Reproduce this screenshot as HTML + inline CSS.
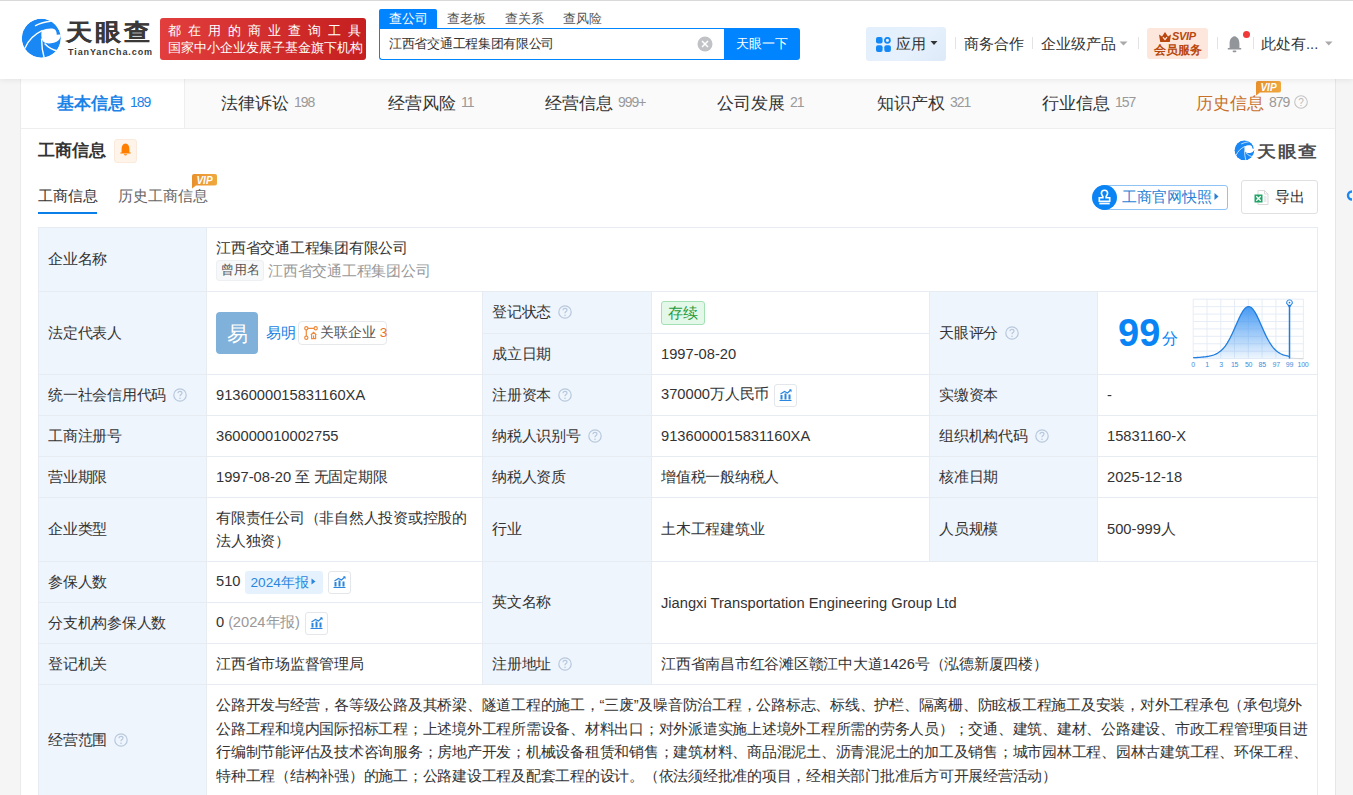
<!DOCTYPE html>
<html><head><meta charset="utf-8">
<style>
*{box-sizing:border-box;margin:0;padding:0}
html,body{width:1353px;height:795px;overflow:hidden;background:#f5f5f5;font-family:"Liberation Sans",sans-serif;color:#333}
.a{position:absolute;white-space:nowrap}
#hdr{position:absolute;left:0;top:0;width:1353px;height:79px;background:#fff;box-shadow:0 1px 6px rgba(0,0,0,.08);z-index:5}
#card{position:absolute;left:20px;top:79px;width:1316px;height:716px;background:#fff;border-left:1px solid #ebebeb;border-right:1px solid #e6e6e6}
#tabs{position:absolute;left:21px;top:79px;width:1314px;height:50px;background:#fafafa;border-bottom:1px solid #eee}
.tab{position:absolute;top:1px;height:48px;line-height:48px;font-size:16.8px;color:#333}
.tab i{font-style:normal;font-size:14px;color:#999;margin-left:5px;letter-spacing:-1px;position:relative;top:-2px}
</style></head><body>
<div id="hdr">
  <div class="a" style="left:0;top:0;width:1353px;height:1px;background:#d9d9d9"></div>
  <!-- logo -->
  <svg class="a" style="left:21px;top:18px" width="41" height="41" viewBox="0 0 41 41">
    <defs><clipPath id="lc1"><circle cx="20.3" cy="20.2" r="19.5"/></clipPath></defs>
    <g clip-path="url(#lc1)"><circle cx="20.3" cy="20.2" r="19.5" fill="#1a88f4"/>
    <path d="M20.9 12.5C24 10.8 29.5 9.8 33 10.9C35 11.8 35.8 13.5 35.7 16.8L38.4 16.5L42 17V19L39.6 18.6C39 21 37.8 22.6 35.5 23.8C32 25.5 27.5 25.8 24.8 25.1C23 24.5 21.8 23.2 21 21.5C20.2 19 20 15 20.9 12.5Z" fill="#fff"/>
    <path d="M14 7.8Q21 4.2 31 3" fill="none" stroke="#fff" stroke-width="1.3"/>
    <path d="M3.8 30.5Q8.5 18.5 21.5 12.4" fill="none" stroke="#fff" stroke-width="1.4"/>
    <path d="M20.6 20.5Q20.5 31 23.5 41" fill="none" stroke="#fff" stroke-width="1.4"/>
    <path d="M23.6 25.5Q29 31.5 37 33" fill="none" stroke="#fff" stroke-width="1.4"/></g>
  </svg>
  <div class="a" style="left:66px;top:18px;font-size:26px;line-height:32px;font-weight:bold;color:#3b3838;letter-spacing:3px;-webkit-text-stroke:0.2px #3b3838;transform:scaleY(0.88);transform-origin:0 0">天眼查</div>
  <div class="a" style="left:68px;top:47px;font-size:9px;line-height:11px;font-weight:bold;color:#3b3838;letter-spacing:0.9px">TianYanCha.com</div>
  <div class="a" style="left:160px;top:18px;width:206px;height:42px;border-radius:3px;background:linear-gradient(90deg,#e23e3e,#c51f1f)">
    <div class="a" style="left:8px;top:4px;font-size:13px;color:#fff;letter-spacing:7px">都在用的商业查询工具</div>
    <div class="a" style="left:8px;top:21px;font-size:13px;color:#fff">国家中小企业发展子基金旗下机构</div>
  </div>
  <!-- search -->
  <div class="a" style="left:379px;top:9px;width:58px;height:20px;background:#0084ff;color:#fff;font-size:13px;text-align:center;line-height:19px;border-radius:2px 2px 0 0">查公司</div>
  <div class="a" style="left:447px;top:9px;font-size:13px;line-height:19px;color:#555">查老板</div>
  <div class="a" style="left:505px;top:9px;font-size:13px;line-height:19px;color:#555">查关系</div>
  <div class="a" style="left:563px;top:9px;font-size:13px;line-height:19px;color:#555">查风险</div>
  <div class="a" style="left:379px;top:28px;width:346px;height:32px;border:1px solid #0084ff;border-right:none;border-radius:0 0 0 3px;background:#fff">
    <div class="a" style="left:9px;top:6px;font-size:13px;line-height:18px;color:#333;letter-spacing:-0.3px">江西省交通工程集团有限公司</div>
    <svg class="a" style="left:317px;top:7px" width="16" height="16" viewBox="0 0 16 16"><circle cx="8" cy="8" r="7.5" fill="#c0c2c6"/><path d="M5 5L11 11M11 5L5 11" stroke="#fff" stroke-width="1.5"/></svg>
  </div>
  <div class="a" style="left:724px;top:28px;width:76px;height:32px;background:#0084ff;color:#fff;font-size:13px;line-height:31px;text-align:center;border-radius:0 3px 3px 0">天眼一下</div>
  <!-- right -->
  <div class="a" style="left:866px;top:27px;width:80px;height:34px;background:linear-gradient(135deg,#e3effc 0%,#e6f1fd 60%,#dde9f8 100%);border-radius:3px"></div>
  <svg class="a" style="left:876px;top:37px" width="15" height="15" viewBox="0 0 15 15">
    <rect x="0" y="0" width="6.6" height="6.6" rx="2" fill="#1488f5"/>
    <circle cx="11.4" cy="3.3" r="2.5" fill="none" stroke="#1488f5" stroke-width="1.8"/>
    <rect x="0" y="8.3" width="6.6" height="6.6" rx="2" fill="#1488f5"/>
    <rect x="8.3" y="8.3" width="6.6" height="6.6" rx="2" fill="#1488f5"/>
  </svg>
  <svg class="a" style="left:930px;top:41px" width="8" height="4" viewBox="0 0 8 4"><path d="M0.5 0H7.5L4 4Z" fill="#333"/></svg>
  <svg class="a" style="left:1119px;top:41px" width="9" height="5" viewBox="0 0 9 5"><path d="M0.5 0.5H8.5L4.5 4.5Z" fill="#aaa"/></svg>
  <svg class="a" style="left:1325px;top:41px" width="8" height="5" viewBox="0 0 8 5"><path d="M0 0.5H7.5L3.75 4.5Z" fill="#aaa"/></svg>
  <div class="a" style="left:896px;top:34px;font-size:14.7px;line-height:20px;color:#333">应用</div>
  <div class="a" style="left:955px;top:37px;width:1px;height:12px;background:#e3e3e3"></div>
  <div class="a" style="left:964px;top:34px;font-size:14.7px;line-height:20px;color:#333">商务合作</div>
  <div class="a" style="left:1032px;top:37px;width:1px;height:12px;background:#e3e3e3"></div>
  <div class="a" style="left:1041px;top:34px;font-size:14.7px;line-height:20px;color:#333">企业级产品</div>
  <div class="a" style="left:1138px;top:37px;width:1px;height:12px;background:#e3e3e3"></div>
  <div class="a" style="left:1147px;top:28px;width:61px;height:31px;background:#fde6dc;border-radius:3px"></div>
  <svg class="a" style="left:1159px;top:32px" width="12" height="10" viewBox="0 0 12 10">
    <path d="M0 2.5L3 4.5L6 0L9 4.5L12 2.5L10.8 10H1.2Z" fill="#b8470d"/>
    <path d="M4 5.2L6 7.6L8 5.2" fill="none" stroke="#fde6dc" stroke-width="1.3"/>
  </svg>
  <div class="a" style="left:1172px;top:30px;font-size:11px;line-height:13px;font-weight:bold;font-style:italic;color:#b8470d;letter-spacing:-0.3px">SVIP</div>
  <div class="a" style="left:1154px;top:43px;font-size:12px;line-height:14px;font-weight:bold;color:#b8470d">会员服务</div>
  <svg class="a" style="left:1227px;top:35px" width="24" height="18" viewBox="0 0 24 18">
    <path d="M7.5 1.2C4 1.8 2.6 5 2.6 8.5V13H0.8V14.4H14.2V13H12.4V8.5C12.4 5 11 1.8 7.5 1.2Z" fill="#929599"/>
    <rect x="5.6" y="15.6" width="3.8" height="1.6" rx="0.8" fill="#929599"/>
    <circle cx="19.5" cy="-0.5" r="0" fill="#f03a3a"/>
  </svg>
  <div class="a" style="left:1243px;top:31px;width:7px;height:7px;border-radius:50%;background:#f03a3a"></div>
  <div class="a" style="left:1217px;top:37px;width:1px;height:12px;background:#e3e3e3"></div>
  <div class="a" style="left:1253px;top:37px;width:1px;height:12px;background:#e3e3e3"></div>
  <div class="a" style="left:1261px;top:34px;font-size:14.7px;line-height:20px;color:#333">此处有...</div>
</div>

<div id="card"></div>
<div id="tabs">
  <div class="a" style="left:0;top:0;width:164px;height:49px;background:#fff;border-right:1px solid #eee"></div>
  <div class="tab" style="left:36px;color:#1a83e8;font-weight:bold">基本信息<i style="color:#1a83e8;font-weight:normal">189</i></div>
  <div class="tab" style="left:200px">法律诉讼<i>198</i></div>
  <div class="tab" style="left:367px">经营风险<i>11</i></div>
  <div class="tab" style="left:524px">经营信息<i>999+</i></div>
  <div class="tab" style="left:696px">公司发展<i>21</i></div>
  <div class="tab" style="left:856px">知识产权<i>321</i></div>
  <div class="tab" style="left:1021px">行业信息<i>157</i></div>
  <div class="tab" style="left:1175px;color:#c8702a">历史信息<i>879</i></div>
  <svg class="a" style="left:1235px;top:1px" width="25" height="16" viewBox="0 0 25 16"><path d="M2 1H23Q25 1 25 3V10.5Q25 12.5 23 12.5H4L0 15.5V3Q0 1 2 1Z" fill="url(#vg)"/><text x="12.5" y="10.6" text-anchor="middle" font-family="Liberation Sans" font-weight="bold" font-style="italic" font-size="10" fill="#fff">VIP</text></svg>
  <svg class="a" style="left:1273px;top:16px" width="14" height="14" viewBox="0 0 14 14"><circle cx="7" cy="7" r="6.3" fill="none" stroke="#c4c4c4" stroke-width="1.1"/><text x="7" y="10.6" text-anchor="middle" font-family="Liberation Sans" font-size="10" fill="#bbb">?</text></svg>
</div>

<div class="a" style="left:38px;top:139px;font-size:16.8px;font-weight:bold;line-height:24px;color:#333">工商信息</div>
<div class="a" style="left:114px;top:139px;width:23px;height:24px;background:#fff4ea;border:1px solid #fbeadc;border-radius:3px"></div>
<svg class="a" style="left:120px;top:143px" width="11" height="13" viewBox="0 0 11 13"><path d="M5.5 0.6C2.8 0.9 1.6 3.2 1.6 6V9.4H0.3V10.6H10.7V9.4H9.4V6C9.4 3.2 8.2 0.9 5.5 0.6Z" fill="#ff7f00"/><path d="M3.8 11.2H7.2Q6.8 12.6 5.5 12.6Q4.2 12.6 3.8 11.2Z" fill="#ff7f00"/></svg>
<div class="a" style="left:38px;top:186px;font-size:14.7px;line-height:20px;color:#333">工商信息</div>
<div class="a" style="left:38px;top:212px;width:59px;height:2px;background:#0b7fe8"></div>
<div class="a" style="left:118px;top:186px;font-size:14.7px;line-height:20px;color:#666">历史工商信息</div>
<svg class="a" style="left:192px;top:173px" width="25" height="16" viewBox="0 0 25 16"><defs><linearGradient id="vg" x1="0" x2="1"><stop offset="0" stop-color="#e8912c"/><stop offset="1" stop-color="#f0a840"/></linearGradient></defs><path d="M2 1H23Q25 1 25 3V10.5Q25 12.5 23 12.5H4L0 15.5V3Q0 1 2 1Z" fill="url(#vg)"/><text x="12.5" y="10.6" text-anchor="middle" font-family="Liberation Sans" font-weight="bold" font-style="italic" font-size="10" fill="#fff">VIP</text></svg>

<div class="a" style="left:1100px;top:185px;width:128px;height:25px;border:1px solid #8fc3f5;border-radius:3px"></div>
<svg class="a" style="left:1092px;top:185px" width="25" height="25" viewBox="0 0 25 25"><circle cx="12.5" cy="12.5" r="12.5" fill="#0a84f5"/>
<path d="M12.5 5.2C10.6 5.2 9.4 6.6 9.4 8.3C9.4 9.6 10.4 10.6 10.9 11.6V12.8H7.3V16.2H17.7V12.8H14.1V11.6C14.6 10.6 15.6 9.6 15.6 8.3C15.6 6.6 14.4 5.2 12.5 5.2Z" fill="none" stroke="#fff" stroke-width="1.6"/>
<rect x="7.3" y="17.6" width="10.4" height="1.8" fill="#fff"/></svg>
<div class="a" style="left:1122px;top:187px;font-size:14.7px;line-height:20px;color:#2a7fd6">工商官网快照</div>
<svg class="a" style="left:1214px;top:193px" width="5" height="7" viewBox="0 0 5 7"><path d="M0.5 0L4.5 3.5L0.5 7Z" fill="#2a7fd6"/></svg>
<svg class="a" style="left:1254px;top:190px" width="15" height="15" viewBox="0 0 15 15"><path d="M4 0.5H10.5L14 4V14.5H4Z" fill="#fff" stroke="#d9d9d9"/><path d="M10.5 0.5V4H14" fill="none" stroke="#d9d9d9"/><rect x="0.5" y="4.5" width="8" height="8" fill="#21a366"/><path d="M2.3 6.3L6.7 10.7M6.7 6.3L2.3 10.7" stroke="#fff" stroke-width="1.3"/><path d="M10 7H12.5M10 9H12.5M10 11H12.5" stroke="#ccc" stroke-width="0.8"/></svg>
<div class="a" style="left:1241px;top:180px;width:77px;height:34px;border:1px solid #e0e0e0;border-radius:3px"></div>
<div class="a" style="left:1275px;top:187px;font-size:14.7px;line-height:20px;color:#333">导出</div>

<svg class="a" style="left:1234px;top:140px" width="21" height="21" viewBox="0 0 41 41"><defs><clipPath id="lc2"><circle cx="20.3" cy="20.2" r="19.5"/></clipPath></defs>
    <g clip-path="url(#lc2)"><circle cx="20.3" cy="20.2" r="19.5" fill="#1a88f4"/>
    <path d="M20.9 12.5C24 10.8 29.5 9.8 33 10.9C35 11.8 35.8 13.5 35.7 16.8L38.4 16.5L42 17V19L39.6 18.6C39 21 37.8 22.6 35.5 23.8C32 25.5 27.5 25.8 24.8 25.1C23 24.5 21.8 23.2 21 21.5C20.2 19 20 15 20.9 12.5Z" fill="#fff"/>
    <path d="M14 7.8Q21 4.2 31 3" fill="none" stroke="#fff" stroke-width="1.3"/>
    <path d="M3.8 30.5Q8.5 18.5 21.5 12.4" fill="none" stroke="#fff" stroke-width="1.4"/>
    <path d="M20.6 20.5Q20.5 31 23.5 41" fill="none" stroke="#fff" stroke-width="1.4"/>
    <path d="M23.6 25.5Q29 31.5 37 33" fill="none" stroke="#fff" stroke-width="1.4"/></g></svg>
<div class="a" style="left:1257px;top:143px;font-size:19px;line-height:21px;font-weight:bold;color:#4d4d4d;letter-spacing:1.5px;transform:scaleY(0.85);transform-origin:0 0">天眼查</div>
<svg class="a" style="left:1345px;top:189px" width="8" height="13" viewBox="0 0 8 13"><path d="M7 2.5A4 4 0 1 0 7 10.5" fill="none" stroke="#1a88f0" stroke-width="2.4"/></svg>
<!--GRID-->
<style>
#grid{position:absolute;left:38px;top:227px;width:1280px;height:600px;background:#e7ecf2}
.c{position:absolute;display:flex;align-items:center;font-size:14.7px;color:#333;padding-left:9px;background:#fff;white-space:nowrap;letter-spacing:-0.25px}
.c .in{display:block;white-space:nowrap}
.n{letter-spacing:0}
.l{background:#eff5fd}
svg.q{display:inline-block;vertical-align:-2px;margin-left:7px}
.ico{display:inline-block;width:23px;height:23px;border:1px solid #e3e6ea;border-radius:3px;margin-left:5px;position:relative;background:#fff;vertical-align:middle}
.ico svg{position:absolute;left:4px;top:4px}
.nm1{position:absolute;left:9px;top:10px;line-height:20px}
.tagg{position:absolute;left:9px;top:32px;width:48px;height:21px;line-height:19px;text-align:center;font-size:12.6px;color:#555;background:#f6f8fa;border:1px solid #edf0f3;border-radius:3px;letter-spacing:0}
.nm2{position:absolute;left:61px;top:33px;line-height:20px;color:#999}
.av{position:absolute;left:9px;top:20px;width:42px;height:42px;border-radius:4px;background:#7fb1da;color:#fff;font-size:21px;line-height:44px;text-align:center}
.pn{position:absolute;left:59px;top:31px;line-height:20px;color:#1a7fe0}
.rel{position:absolute;left:91px;top:29px;width:89px;height:24px;line-height:22px;border:1px solid #e6e8eb;border-radius:4px;padding-left:21px;font-size:13.65px;color:#555;letter-spacing:0}
.rel b{font-weight:normal;color:#e8732a}
.cx{display:inline-block;height:24px;line-height:22px;padding:0 6px;border:1px solid #a3e0b3;background:#e3f8e8;color:#1f9a3a;border-radius:3px;font-size:14.7px;vertical-align:middle}
.nb{display:inline-block;height:23px;line-height:23px;background:#e5f2fe;color:#2a86dd;font-size:13.65px;padding:0 14px 0 6px;margin-left:4px;border-radius:3px;position:relative;vertical-align:middle;letter-spacing:0}
.gr{color:#999;margin-left:4px}
.scope{position:absolute;left:9px;top:9.3px;line-height:23.5px}
.sl{white-space:nowrap}
#score{position:absolute;left:20px;top:19px;font-size:38px;line-height:44px;font-weight:bold;color:#0a84f5;letter-spacing:0}
#fen{position:absolute;left:64px;top:37px;font-size:16px;line-height:20px;color:#0a84f5}
</style>
<div id="grid">
<div class="c l" style="left:1px;top:1px;width:167px;height:63px"><div class="in">企业名称</div></div>
<div class="c" style="left:169px;top:1px;width:1110px;height:63px;display:block"><div class="nm1">江西省交通工程集团有限公司</div><div class="tagg">曾用名</div><div class="nm2">江西省交通工程集团公司</div></div>
<div class="c l" style="left:1px;top:65px;width:167px;height:82px"><div class="in">法定代表人</div></div>
<div class="c" style="left:169px;top:65px;width:275px;height:82px;display:block"><span class="av">易</span><span class="pn">易明</span><span class="rel"><svg style="position:absolute;left:5px;top:4px" width="14" height="14" viewBox="0 0 14 14"><g fill="none" stroke="#f08a3c" stroke-width="1.2"><circle cx="2.3" cy="2.3" r="1.6"/><circle cx="11.7" cy="2.3" r="1.6"/><circle cx="2.3" cy="11.7" r="1.6"/><path d="M3.9 2.3H10.1M2.3 3.9V10.1"/><path d="M6.8 9L9.6 6.4L12.4 9M7.6 8.4V12.6H11.6V8.4M9.6 9.6V12.6"/></g></svg>关联企业 <b>3</b></span></div>
<div class="c l" style="left:445px;top:65px;width:168px;height:41px"><div class="in">登记状态<svg class="q" width="14" height="14" viewBox="0 0 14 14"><circle cx="7" cy="7" r="6.2" fill="none" stroke="#b7c8dc" stroke-width="1.2"/><path d="M5 5.3Q5 3.4 7 3.4Q9 3.4 9 5.1Q9 6.2 7.6 6.9Q7 7.2 7 8.3" fill="none" stroke="#b7c8dc" stroke-width="1.2"/><circle cx="7" cy="10.3" r="0.8" fill="#b7c8dc"/></svg></div></div>
<div class="c" style="left:614px;top:65px;width:277px;height:41px"><div class="in"><span class="cx">存续</span></div></div>
<div class="c l" style="left:445px;top:107px;width:168px;height:40px"><div class="in">成立日期</div></div>
<div class="c" style="left:614px;top:107px;width:277px;height:40px"><div class="in"><span class="n">1997-08-20</span></div></div>
<div class="c l" style="left:892px;top:65px;width:167px;height:82px"><div class="in">天眼评分<svg class="q" width="14" height="14" viewBox="0 0 14 14"><circle cx="7" cy="7" r="6.2" fill="none" stroke="#b7c8dc" stroke-width="1.2"/><path d="M5 5.3Q5 3.4 7 3.4Q9 3.4 9 5.1Q9 6.2 7.6 6.9Q7 7.2 7 8.3" fill="none" stroke="#b7c8dc" stroke-width="1.2"/><circle cx="7" cy="10.3" r="0.8" fill="#b7c8dc"/></svg></div></div>
<div class="c" style="left:1060px;top:65px;width:219px;height:82px;display:block"><span id="score">99</span><span id="fen">分</span><svg style="position:absolute;left:92px;top:5px" width="120" height="74" viewBox="0 0 120 74">
<defs><linearGradient id="bg1" x1="0" y1="0" x2="0" y2="1"><stop offset="0" stop-color="#3d95f2" stop-opacity="0.95"/><stop offset="1" stop-color="#3d95f2" stop-opacity="0.08"/></linearGradient></defs>
<g stroke="#e3ebf5" stroke-width="0.9" fill="none"><path d="M3.2 2.2V61.6"/><path d="M17.0 2.2V61.6"/><path d="M30.8 2.2V61.6"/><path d="M44.5 2.2V61.6"/><path d="M58.3 2.2V61.6"/><path d="M72.1 2.2V61.6"/><path d="M85.9 2.2V61.6"/><path d="M99.6 2.2V61.6"/><path d="M113.4 2.2V61.6"/><path d="M3.2 2.2H113.4"/><path d="M3.2 9.6H113.4"/><path d="M3.2 17.1H113.4"/><path d="M3.2 24.5H113.4"/><path d="M3.2 31.9H113.4"/><path d="M3.2 39.3H113.4"/><path d="M3.2 46.8H113.4"/><path d="M3.2 54.2H113.4"/><path d="M3.2 61.6H113.4"/></g>
<path d="M3.2,60.67 L4.2,60.63 L5.2,60.59 L6.2,60.54 L7.2,60.49 L8.2,60.43 L9.2,60.36 L10.2,60.29 L11.2,60.21 L12.2,60.12 L13.2,60.02 L14.2,59.91 L15.2,59.79 L16.2,59.66 L17.2,59.51 L18.2,59.34 L19.2,59.15 L20.2,58.93 L21.2,58.69 L22.2,58.41 L23.2,58.10 L24.2,57.74 L25.2,57.33 L26.2,56.87 L27.2,56.35 L28.2,55.76 L29.2,55.09 L30.2,54.34 L31.2,53.50 L32.2,52.55 L33.2,51.50 L34.2,50.33 L35.2,49.05 L36.2,47.64 L37.2,46.11 L38.2,44.45 L39.2,42.67 L40.2,40.78 L41.2,38.78 L42.2,36.68 L43.2,34.51 L44.2,32.28 L45.2,30.00 L46.2,27.71 L47.2,25.43 L48.2,23.20 L49.2,21.03 L50.2,18.97 L51.2,17.05 L52.2,15.29 L53.2,13.72 L54.2,12.38 L55.2,11.28 L56.2,10.44 L57.2,9.89 L58.2,9.62 L59.2,9.65 L60.2,9.98 L61.2,10.59 L62.2,11.48 L63.2,12.63 L64.2,14.02 L65.2,15.62 L66.2,17.42 L67.2,19.37 L68.2,21.46 L69.2,23.64 L70.2,25.89 L71.2,28.17 L72.2,30.46 L73.2,32.73 L74.2,34.95 L75.2,37.11 L76.2,39.19 L77.2,41.17 L78.2,43.04 L79.2,44.79 L80.2,46.42 L81.2,47.93 L82.2,49.31 L83.2,50.57 L84.2,51.72 L85.2,52.75 L86.2,53.67 L87.2,54.50 L88.2,55.23 L89.2,55.89 L90.2,56.46 L91.2,56.97 L92.2,57.42 L93.2,57.81 L94.2,58.16 L95.2,58.47 L96.2,58.74 L97.2,58.97 L98.2,59.19 L99.2,59.37 L99.5,59.42 L99.5,61.6 L3.2,61.6 Z" fill="url(#bg1)"/>
<path d="M3.2,60.67 L4.2,60.63 L5.2,60.59 L6.2,60.54 L7.2,60.49 L8.2,60.43 L9.2,60.36 L10.2,60.29 L11.2,60.21 L12.2,60.12 L13.2,60.02 L14.2,59.91 L15.2,59.79 L16.2,59.66 L17.2,59.51 L18.2,59.34 L19.2,59.15 L20.2,58.93 L21.2,58.69 L22.2,58.41 L23.2,58.10 L24.2,57.74 L25.2,57.33 L26.2,56.87 L27.2,56.35 L28.2,55.76 L29.2,55.09 L30.2,54.34 L31.2,53.50 L32.2,52.55 L33.2,51.50 L34.2,50.33 L35.2,49.05 L36.2,47.64 L37.2,46.11 L38.2,44.45 L39.2,42.67 L40.2,40.78 L41.2,38.78 L42.2,36.68 L43.2,34.51 L44.2,32.28 L45.2,30.00 L46.2,27.71 L47.2,25.43 L48.2,23.20 L49.2,21.03 L50.2,18.97 L51.2,17.05 L52.2,15.29 L53.2,13.72 L54.2,12.38 L55.2,11.28 L56.2,10.44 L57.2,9.89 L58.2,9.62 L59.2,9.65 L60.2,9.98 L61.2,10.59 L62.2,11.48 L63.2,12.63 L64.2,14.02 L65.2,15.62 L66.2,17.42 L67.2,19.37 L68.2,21.46 L69.2,23.64 L70.2,25.89 L71.2,28.17 L72.2,30.46 L73.2,32.73 L74.2,34.95 L75.2,37.11 L76.2,39.19 L77.2,41.17 L78.2,43.04 L79.2,44.79 L80.2,46.42 L81.2,47.93 L82.2,49.31 L83.2,50.57 L84.2,51.72 L85.2,52.75 L86.2,53.67 L87.2,54.50 L88.2,55.23 L89.2,55.89 L90.2,56.46 L91.2,56.97 L92.2,57.42 L93.2,57.81 L94.2,58.16 L95.2,58.47 L96.2,58.74 L97.2,58.97 L98.2,59.19 L99.2,59.37 L99.5,59.42" fill="none" stroke="#1f7ee0" stroke-width="1.3"/>
<path d="M99.5 61.0 Q106 61.6 113.4 61.6" fill="none" stroke="#d6d9de" stroke-width="1.2"/>
<path d="M99.5 8V61.6" stroke="#1f7ee0" stroke-width="1.5"/>
<path d="M96.3 6.5A3.3 3.3 0 1 1 102.7 6.5L99.5 11Z" fill="#1f7ee0"/>
<circle cx="99.5" cy="5.6" r="2.3" fill="#fff"/><circle cx="99.5" cy="5.6" r="0.9" fill="#1f7ee0"/>
<g font-family="Liberation Sans" font-size="7" fill="#3d8fe0" text-anchor="middle"><text x="3.2" y="70">0</text><text x="17" y="70">1</text><text x="31" y="70">3</text><text x="44.6" y="70">15</text><text x="58.6" y="70">50</text><text x="72.2" y="70">85</text><text x="86.2" y="70">97</text><text x="99.5" y="70">99</text><text x="113" y="70">100</text></g>
</svg></div>
<div class="c l" style="left:1px;top:148px;width:167px;height:40px"><div class="in">统一社会信用代码<svg class="q" width="14" height="14" viewBox="0 0 14 14"><circle cx="7" cy="7" r="6.2" fill="none" stroke="#b7c8dc" stroke-width="1.2"/><path d="M5 5.3Q5 3.4 7 3.4Q9 3.4 9 5.1Q9 6.2 7.6 6.9Q7 7.2 7 8.3" fill="none" stroke="#b7c8dc" stroke-width="1.2"/><circle cx="7" cy="10.3" r="0.8" fill="#b7c8dc"/></svg></div></div>
<div class="c" style="left:169px;top:148px;width:275px;height:40px"><div class="in"><span class="n">9136000015831160XA</span></div></div>
<div class="c l" style="left:445px;top:148px;width:168px;height:40px"><div class="in">注册资本<svg class="q" width="14" height="14" viewBox="0 0 14 14"><circle cx="7" cy="7" r="6.2" fill="none" stroke="#b7c8dc" stroke-width="1.2"/><path d="M5 5.3Q5 3.4 7 3.4Q9 3.4 9 5.1Q9 6.2 7.6 6.9Q7 7.2 7 8.3" fill="none" stroke="#b7c8dc" stroke-width="1.2"/><circle cx="7" cy="10.3" r="0.8" fill="#b7c8dc"/></svg></div></div>
<div class="c" style="left:614px;top:148px;width:277px;height:40px"><div class="in"><span class="n">370000</span>万人民币<span class="ico"><svg width="13" height="12" viewBox="0 0 13 12"><rect x="1.5" y="6" width="2" height="4.5" fill="#2b86e0"/><rect x="5.5" y="4.5" width="2" height="6" fill="#2b86e0"/><rect x="9.5" y="5.5" width="2" height="5" fill="#2b86e0"/><path d="M1.5 5L5.5 2.5L8.5 4L12 0.8" fill="none" stroke="#2b86e0" stroke-width="1.2"/><path d="M9.8 0.5H12.5V3.2Z" fill="#2b86e0"/><rect x="0.5" y="11" width="12" height="1.2" fill="#2b86e0"/></svg></span></div></div>
<div class="c l" style="left:892px;top:148px;width:167px;height:40px"><div class="in">实缴资本</div></div>
<div class="c" style="left:1060px;top:148px;width:219px;height:40px"><div class="in"><span class="n">-</span></div></div>
<div class="c l" style="left:1px;top:189px;width:167px;height:40px"><div class="in">工商注册号</div></div>
<div class="c" style="left:169px;top:189px;width:275px;height:40px"><div class="in"><span class="n">360000010002755</span></div></div>
<div class="c l" style="left:445px;top:189px;width:168px;height:40px"><div class="in">纳税人识别号<svg class="q" width="14" height="14" viewBox="0 0 14 14"><circle cx="7" cy="7" r="6.2" fill="none" stroke="#b7c8dc" stroke-width="1.2"/><path d="M5 5.3Q5 3.4 7 3.4Q9 3.4 9 5.1Q9 6.2 7.6 6.9Q7 7.2 7 8.3" fill="none" stroke="#b7c8dc" stroke-width="1.2"/><circle cx="7" cy="10.3" r="0.8" fill="#b7c8dc"/></svg></div></div>
<div class="c" style="left:614px;top:189px;width:277px;height:40px"><div class="in"><span class="n">9136000015831160XA</span></div></div>
<div class="c l" style="left:892px;top:189px;width:167px;height:40px"><div class="in">组织机构代码<svg class="q" width="14" height="14" viewBox="0 0 14 14"><circle cx="7" cy="7" r="6.2" fill="none" stroke="#b7c8dc" stroke-width="1.2"/><path d="M5 5.3Q5 3.4 7 3.4Q9 3.4 9 5.1Q9 6.2 7.6 6.9Q7 7.2 7 8.3" fill="none" stroke="#b7c8dc" stroke-width="1.2"/><circle cx="7" cy="10.3" r="0.8" fill="#b7c8dc"/></svg></div></div>
<div class="c" style="left:1060px;top:189px;width:219px;height:40px"><div class="in"><span class="n">15831160-X</span></div></div>
<div class="c l" style="left:1px;top:230px;width:167px;height:40px"><div class="in">营业期限</div></div>
<div class="c" style="left:169px;top:230px;width:275px;height:40px"><div class="in"><span class="n">1997-08-20</span> 至 无固定期限</div></div>
<div class="c l" style="left:445px;top:230px;width:168px;height:40px"><div class="in">纳税人资质</div></div>
<div class="c" style="left:614px;top:230px;width:277px;height:40px"><div class="in">增值税一般纳税人</div></div>
<div class="c l" style="left:892px;top:230px;width:167px;height:40px"><div class="in">核准日期</div></div>
<div class="c" style="left:1060px;top:230px;width:219px;height:40px"><div class="in"><span class="n">2025-12-18</span></div></div>
<div class="c l" style="left:1px;top:271px;width:167px;height:63px"><div class="in">企业类型</div></div>
<div class="c" style="left:169px;top:271px;width:275px;height:63px"><div class="in"><div style="line-height:23px">有限责任公司（非自然人投资或控股的<br>法人独资）</div></div></div>
<div class="c l" style="left:445px;top:271px;width:168px;height:63px"><div class="in">行业</div></div>
<div class="c" style="left:614px;top:271px;width:277px;height:63px"><div class="in">土木工程建筑业</div></div>
<div class="c l" style="left:892px;top:271px;width:167px;height:63px"><div class="in">人员规模</div></div>
<div class="c" style="left:1060px;top:271px;width:219px;height:63px"><div class="in"><span class="n">500-999</span>人</div></div>
<div class="c l" style="left:1px;top:335px;width:167px;height:40px"><div class="in">参保人数</div></div>
<div class="c" style="left:169px;top:335px;width:275px;height:40px"><div class="in"><span class="n">510</span><span class="nb"><span class="n">2024</span>年报<svg style="position:absolute;right:7px;top:7px" width="5" height="7" viewBox="0 0 5 7"><path d="M0.5 0.5L4.5 3.5L0.5 6.5Z" fill="#2a86dd"/></svg></span><span class="ico"><svg width="13" height="12" viewBox="0 0 13 12"><rect x="1.5" y="6" width="2" height="4.5" fill="#2b86e0"/><rect x="5.5" y="4.5" width="2" height="6" fill="#2b86e0"/><rect x="9.5" y="5.5" width="2" height="5" fill="#2b86e0"/><path d="M1.5 5L5.5 2.5L8.5 4L12 0.8" fill="none" stroke="#2b86e0" stroke-width="1.2"/><path d="M9.8 0.5H12.5V3.2Z" fill="#2b86e0"/><rect x="0.5" y="11" width="12" height="1.2" fill="#2b86e0"/></svg></span></div></div>
<div class="c l" style="left:1px;top:376px;width:167px;height:40px"><div class="in">分支机构参保人数</div></div>
<div class="c" style="left:169px;top:376px;width:275px;height:40px"><div class="in"><span class="n">0</span><span class="gr">(<span class="n">2024</span>年报)</span><span class="ico"><svg width="13" height="12" viewBox="0 0 13 12"><rect x="1.5" y="6" width="2" height="4.5" fill="#2b86e0"/><rect x="5.5" y="4.5" width="2" height="6" fill="#2b86e0"/><rect x="9.5" y="5.5" width="2" height="5" fill="#2b86e0"/><path d="M1.5 5L5.5 2.5L8.5 4L12 0.8" fill="none" stroke="#2b86e0" stroke-width="1.2"/><path d="M9.8 0.5H12.5V3.2Z" fill="#2b86e0"/><rect x="0.5" y="11" width="12" height="1.2" fill="#2b86e0"/></svg></span></div></div>
<div class="c l" style="left:445px;top:335px;width:168px;height:81px"><div class="in">英文名称</div></div>
<div class="c" style="left:614px;top:335px;width:665px;height:81px"><div class="in"><span class="n">Jiangxi Transportation Engineering Group Ltd</span></div></div>
<div class="c l" style="left:1px;top:417px;width:167px;height:40px"><div class="in">登记机关</div></div>
<div class="c" style="left:169px;top:417px;width:275px;height:40px"><div class="in">江西省市场监督管理局</div></div>
<div class="c l" style="left:445px;top:417px;width:168px;height:40px"><div class="in">注册地址<svg class="q" width="14" height="14" viewBox="0 0 14 14"><circle cx="7" cy="7" r="6.2" fill="none" stroke="#b7c8dc" stroke-width="1.2"/><path d="M5 5.3Q5 3.4 7 3.4Q9 3.4 9 5.1Q9 6.2 7.6 6.9Q7 7.2 7 8.3" fill="none" stroke="#b7c8dc" stroke-width="1.2"/><circle cx="7" cy="10.3" r="0.8" fill="#b7c8dc"/></svg></div></div>
<div class="c" style="left:614px;top:417px;width:665px;height:40px"><div class="in">江西省南昌市红谷滩区赣江中大道<span class="n">1426</span>号（泓德新厦四楼）</div></div>
<div class="c l" style="left:1px;top:458px;width:167px;height:110px"><div class="in">经营范围<svg class="q" width="14" height="14" viewBox="0 0 14 14"><circle cx="7" cy="7" r="6.2" fill="none" stroke="#b7c8dc" stroke-width="1.2"/><path d="M5 5.3Q5 3.4 7 3.4Q9 3.4 9 5.1Q9 6.2 7.6 6.9Q7 7.2 7 8.3" fill="none" stroke="#b7c8dc" stroke-width="1.2"/><circle cx="7" cy="10.3" r="0.8" fill="#b7c8dc"/></svg></div></div>
<div class="c" style="left:169px;top:458px;width:1110px;height:110px;display:block"><div class="scope"><div class="sl">公路开发与经营，各等级公路及其桥梁、隧道工程的施工，“三废”及噪音防治工程，公路标志、标线、护栏、隔离栅、防眩板工程施工及安装，对外工程承包（承包境外</div><div class="sl">公路工程和境内国际招标工程；上述境外工程所需设备、材料出口；对外派遣实施上述境外工程所需的劳务人员）；交通、建筑、建材、公路建设、市政工程管理项目进</div><div class="sl">行编制节能评估及技术咨询服务；房地产开发；机械设备租赁和销售；建筑材料、商品混泥土、沥青混泥土的加工及销售；城市园林工程、园林古建筑工程、环保工程、</div><div class="sl">特种工程（结构补强）的施工；公路建设工程及配套工程的设计。（依法须经批准的项目，经相关部门批准后方可开展经营活动）</div></div></div>
</div>
</body></html>
